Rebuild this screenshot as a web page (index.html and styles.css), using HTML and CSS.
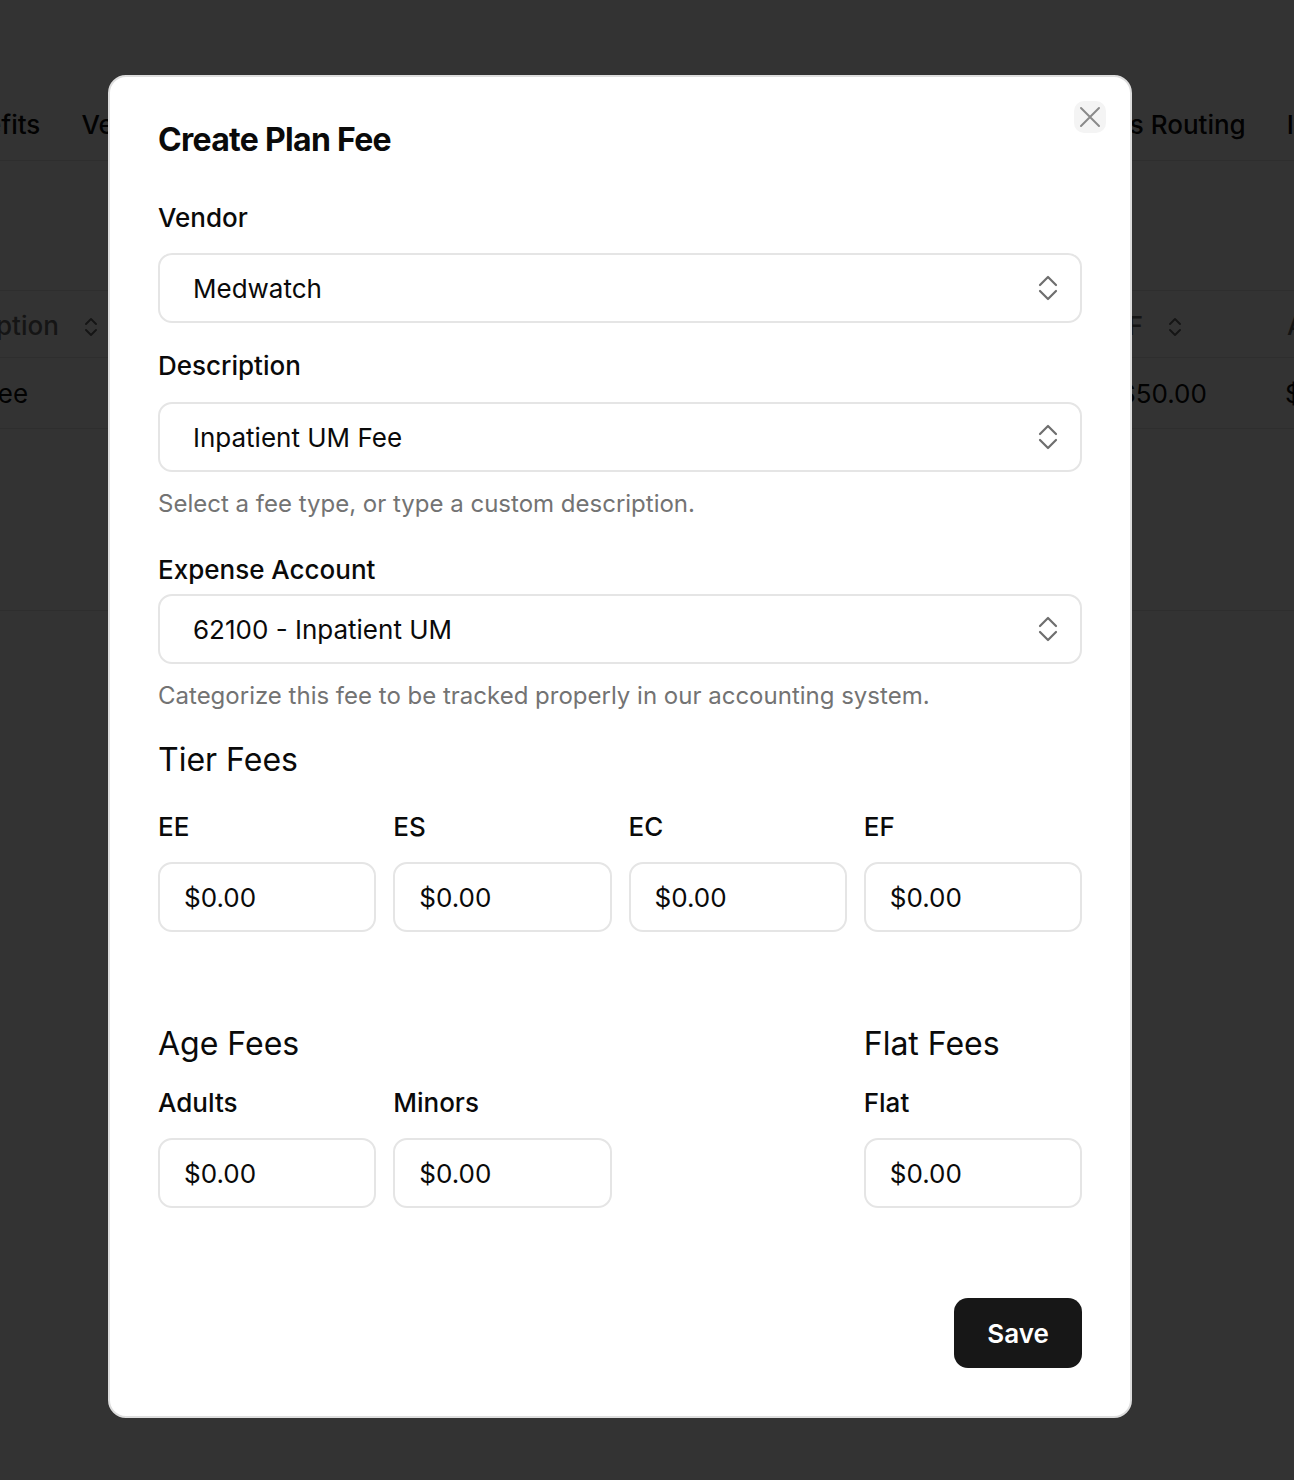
FILE: index.html
```html
<!DOCTYPE html>
<html lang="en">
<head>
    <meta charset="UTF-8">
    <meta name="viewport" content="width=device-width, initial-scale=1.0">
    <title>Create Plan Fee</title>
    <link rel="stylesheet" href="styles.css">
</head>
<body>

    <!-- page behind the dialog -->
    <div class="page">
        <nav class="tabs">
            <div class="tab-group tab-group-left">
                <span>Benefits</span>
                <span>Vendors</span>
            </div>
            <div class="tab-group tab-group-right">
                <span>Claims Routing</span>
                <span>Invoices</span>
            </div>
        </nav>

        <div class="fees-table">
            <div class="fees-row fees-head">
                <span class="cell-desc">Description
                    <svg class="sort" width="14" height="20" viewBox="0 0 14 20" fill="none" stroke="currentColor" stroke-width="2" stroke-linecap="round" stroke-linejoin="round">
                        <path d="M2 7 L7 2 L12 7"/><path d="M2 13 L7 18 L12 13"/>
                    </svg>
                </span>
                <span class="cell-ef">EF
                    <svg class="sort" width="14" height="20" viewBox="0 0 14 20" fill="none" stroke="currentColor" stroke-width="2" stroke-linecap="round" stroke-linejoin="round">
                        <path d="M2 7 L7 2 L12 7"/><path d="M2 13 L7 18 L12 13"/>
                    </svg>
                </span>
                <span>Adults</span>
            </div>
            <div class="fees-row fees-body">
                <span class="cell-desc">Inpatient UM Fee</span>
                <span class="cell-ef">$50.00</span>
                <span>$0.00</span>
            </div>
            <div class="fees-foot"></div>
        </div>
    </div>

    <div class="overlay">
        <div class="modal">
            <button class="btn-close" aria-label="Close">
                <svg width="22" height="22" viewBox="0 0 22 22" fill="none" stroke="#8a8a8a" stroke-width="2" stroke-linecap="round">
                    <path d="M2 2 L20 20 M20 2 L2 20"/>
                </svg>
            </button>

            <h2 class="modal-title">Create Plan Fee</h2>

            <label class="field-label label-vendor">Vendor</label>
            <div class="select">
                <span>Medwatch</span>
                <svg class="chevrons" width="20" height="26" viewBox="0 0 20 26" fill="none" stroke="#6e6e6e" stroke-width="2.2" stroke-linecap="round" stroke-linejoin="round">
                    <path d="M2 10 L10 2 L18 10"/>
                    <path d="M2 16 L10 24 L18 16"/>
                </svg>
            </div>

            <label class="field-label label-description">Description</label>
            <div class="select">
                <span>Inpatient UM Fee</span>
                <svg class="chevrons" width="20" height="26" viewBox="0 0 20 26" fill="none" stroke="#6e6e6e" stroke-width="2.2" stroke-linecap="round" stroke-linejoin="round">
                    <path d="M2 10 L10 2 L18 10"/>
                    <path d="M2 16 L10 24 L18 16"/>
                </svg>
            </div>
            <p class="hint">Select a fee type, or type a custom description.</p>

            <label class="field-label label-account">Expense Account</label>
            <div class="select">
                <span>62100 - Inpatient UM</span>
                <svg class="chevrons" width="20" height="26" viewBox="0 0 20 26" fill="none" stroke="#6e6e6e" stroke-width="2.2" stroke-linecap="round" stroke-linejoin="round">
                    <path d="M2 10 L10 2 L18 10"/>
                    <path d="M2 16 L10 24 L18 16"/>
                </svg>
            </div>
            <p class="hint">Categorize this fee to be tracked properly in our accounting system.</p>

            <h3 class="section-title tier-title">Tier Fees</h3>
            <div class="fee-grid tier-grid">
                <div class="fee-field">
                    <label class="field-label">EE</label>
                    <input class="money" type="text" value="$0.00">
                </div>
                <div class="fee-field">
                    <label class="field-label">ES</label>
                    <input class="money" type="text" value="$0.00">
                </div>
                <div class="fee-field">
                    <label class="field-label">EC</label>
                    <input class="money" type="text" value="$0.00">
                </div>
                <div class="fee-field">
                    <label class="field-label">EF</label>
                    <input class="money" type="text" value="$0.00">
                </div>
            </div>

            <div class="fee-grid extra-grid">
                <div class="age-fees">
                    <h3 class="section-title">Age Fees</h3>
                    <div class="age-inputs">
                        <div class="fee-field">
                            <label class="field-label">Adults</label>
                            <input class="money" type="text" value="$0.00">
                        </div>
                        <div class="fee-field">
                            <label class="field-label">Minors</label>
                            <input class="money" type="text" value="$0.00">
                        </div>
                    </div>
                </div>
                <div class="flat-fees">
                    <h3 class="section-title">Flat Fees</h3>
                    <div class="fee-field">
                        <label class="field-label">Flat</label>
                        <input class="money" type="text" value="$0.00">
                    </div>
                </div>
            </div>

            <div class="modal-actions">
                <button class="btn-save">Save</button>
            </div>
        </div>
    </div>

</body>
</html>
```

FILE: styles.css
```css
* {
    box-sizing: border-box;
}

body {
    margin: 0;
    font-family: Inter, "Noto Sans", Arial, sans-serif;
    color: #0a0a0a;
    background: #ffffff;
    overflow: hidden;
    height: 1480px;
}

/* background page */

.page {
    padding-top: 107px;
    overflow: hidden;
}

.tabs {
    display: flex;
    justify-content: space-between;
    border-bottom: 1px solid #e6e6e6;
    padding-bottom: 17px;
    font-size: 26px;
    font-weight: 500;
    line-height: 36px;
}

.tab-group {
    display: flex;
    gap: 41px;
    flex-shrink: 0;
}

.tab-group-left {
    margin-left: -62px;
}

.tab-group-right {
    margin-right: -96px;
}

.fees-table {
    margin-top: 129px;
    border-top: 1px solid #e6e6e6;
}

.fees-row {
    display: flex;
    align-items: center;
    height: 67px;
    border-bottom: 1px solid #e6e6e6;
    font-size: 26px;
    white-space: nowrap;
}

.fees-row > span {
    flex-shrink: 0;
}

.fees-head {
    color: #6b6b6b;
    font-weight: 500;
    padding-top: 2px;
}

.fees-body {
    height: 71px;
}

.sort {
    margin-left: 18px;
    vertical-align: -2px;
}

.fees-head .cell-desc {
    margin-left: -84px;
    width: 1196px;
}

.fees-head .cell-ef {
    width: 175px;
}

.fees-body .cell-desc {
    margin-left: -181px;
    width: 1300px;
}

.fees-body .cell-ef {
    width: 166px;
}

.fees-foot {
    height: 182px;
    border-bottom: 1px solid #e6e6e6;
}

/* dialog */

.overlay {
    position: fixed;
    inset: 0;
    background: rgba(0, 0, 0, 0.8);
    padding-top: 75px;
    padding-left: 108px;
}

.modal {
    position: relative;
    width: 1024px;
    background: #ffffff;
    border: 2px solid #dedede;
    border-radius: 18px;
    padding: 48px;
}

.btn-close {
    position: absolute;
    top: 24px;
    right: 24px;
    width: 32px;
    height: 32px;
    border: none;
    border-radius: 10px;
    background: #f4f4f4;
    display: flex;
    align-items: center;
    justify-content: center;
    padding: 0;
}

.modal-title {
    margin: 0;
    font-size: 32px;
    line-height: 30px;
    font-weight: 700;
    letter-spacing: -0.7px;
}

.field-label {
    display: block;
    font-size: 26px;
    font-weight: 500;
    line-height: 30px;
}

.label-vendor {
    margin-top: 48px;
    margin-bottom: 20px;
}

.label-description {
    margin-top: 28px;
    margin-bottom: 21px;
}

.label-account {
    margin-top: 36px;
    margin-bottom: 9px;
}

.select {
    display: flex;
    align-items: center;
    justify-content: space-between;
    height: 70px;
    border: 2px solid #e5e5e5;
    border-radius: 14px;
    padding: 0 22px 0 33px;
    font-size: 26px;
}

.hint {
    margin: 17px 0 0;
    font-size: 24px;
    line-height: 30px;
    color: #737373;
}

.section-title {
    margin: 0;
    font-size: 32px;
    font-weight: 400;
    line-height: 40px;
}

.tier-title {
    margin-top: 29px;
}

.fee-grid {
    display: grid;
    grid-template-columns: repeat(4, 1fr);
    column-gap: 17px;
}

.tier-grid {
    margin-top: 32px;
}

.fee-field .field-label {
    margin-bottom: 20px;
}

.money {
    display: block;
    width: 100%;
    height: 70px;
    border: 2px solid #e5e5e5;
    border-radius: 14px;
    padding: 0 24px;
    font-family: inherit;
    font-size: 26px;
    color: #0a0a0a;
    background: #ffffff;
    outline: none;
}

.extra-grid {
    margin-top: 92px;
}

.age-fees {
    grid-column: 1 / 3;
}

.age-inputs {
    display: grid;
    grid-template-columns: 1fr 1fr;
    column-gap: 17px;
    margin-top: 24px;
}

.flat-fees {
    grid-column: 4;
}

.flat-fees .fee-field {
    margin-top: 24px;
}

.modal-actions {
    display: flex;
    justify-content: flex-end;
    margin-top: 90px;
}

.btn-save {
    width: 128px;
    height: 70px;
    border: none;
    border-radius: 14px;
    background: #171717;
    color: #ffffff;
    font-family: inherit;
    font-size: 26px;
    font-weight: 600;
    cursor: pointer;
}
```
